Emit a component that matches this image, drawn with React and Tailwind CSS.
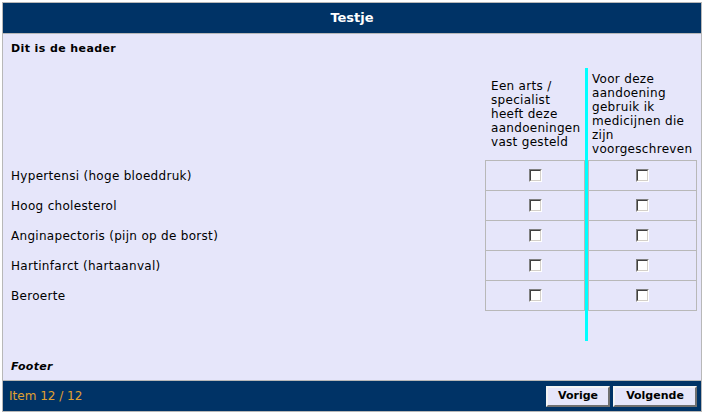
const conditions = [
  "Hypertensi (hoge bloeddruk)",
  "Hoog cholesterol",
  "Anginapectoris (pijn op de borst)",
  "Hartinfarct (hartaanval)",
  "Beroerte",
];

const Checkbox = () => (
  <span className="block w-[13px] h-[13px] border border-t-[#808080] border-l-[#808080] border-b-white border-r-white">
    <span className="block w-full h-full bg-white border border-t-[#404040] border-l-[#404040] border-b-[#d4d0c8] border-r-[#d4d0c8]" />
  </span>
);

const Cells = () => (
  <>
    {conditions.map((c, i) => (
      <div
        key={c}
        className={`flex items-center justify-center border-t border-l border-r border-[#b8b8b8] ${
          i === conditions.length - 1 ? "h-[31px] border-b" : "h-[30px]"
        }`}
      >
        <Checkbox />
      </div>
    ))}
  </>
);

const App = () => {
  return (
    <div className="w-[704px] h-[416px] bg-white p-[2px] font-['DejaVu_Sans',sans-serif] text-black">
      <div className="border border-[#b8b8b8] bg-[#e6e6fa]">
        <div className="h-[31px] bg-[#003366] border-b border-[#b8b8b8] flex items-center justify-center text-white font-bold text-[13px]">
          Testje
        </div>

        <div className="h-[346px] flex flex-col pt-[8px] pl-[8px] pr-[4px]">
          <div className="text-[11px] font-bold leading-[14px] tracking-[0.4px]">Dit is de header</div>

          <div className="flex mt-[12px] text-[12px] leading-[14px] tracking-[0.3px]">
            <div className="flex-1 flex flex-col">
              <div className="h-[92px]" />
              {conditions.map((c) => (
                <div key={c} className="h-[30px] flex items-center pt-[2px]">
                  {c}
                </div>
              ))}
            </div>

            <div className="w-[100px] flex flex-col">
              <div className="h-[92px] flex items-center pl-[6px]">
                <div className="w-[93px]">Een arts / specialist heeft deze aandoeningen vast gesteld</div>
              </div>
              <Cells />
            </div>

            <div className="w-[3px] h-[273px] bg-[#00ffff]" />

            <div className="w-[109px] flex flex-col">
              <div className="h-[92px] flex items-center pl-[4px]">
                <div className="w-[104px]">Voor deze aandoening gebruik ik medicijnen die zijn voorgeschreven</div>
              </div>
              <Cells />
            </div>
          </div>

          <div className="mt-auto pb-[6px] text-[11px] font-bold italic leading-[14px] tracking-[0.3px]">Footer</div>
        </div>

        <div className="h-[31px] bg-[#003366] border-t border-[#b8b8b8] flex items-center justify-between pl-[6px] pr-[4px]">
          <span className="text-[12px] text-[#e0a030]">Item 12 / 12</span>
          <div className="flex gap-[3px]">
            <button className="w-[64px] h-[21px] bg-[#e6e6fa] text-[11px] font-bold border-2 border-t-[#f4f4f4] border-l-[#f4f4f4] border-b-[#707070] border-r-[#707070]">
              Vorige
            </button>
            <button className="w-[84px] h-[21px] bg-[#e6e6fa] text-[11px] font-bold border-2 border-t-[#f4f4f4] border-l-[#f4f4f4] border-b-[#707070] border-r-[#707070]">
              Volgende
            </button>
          </div>
        </div>
      </div>
    </div>
  );
};

export default App;
